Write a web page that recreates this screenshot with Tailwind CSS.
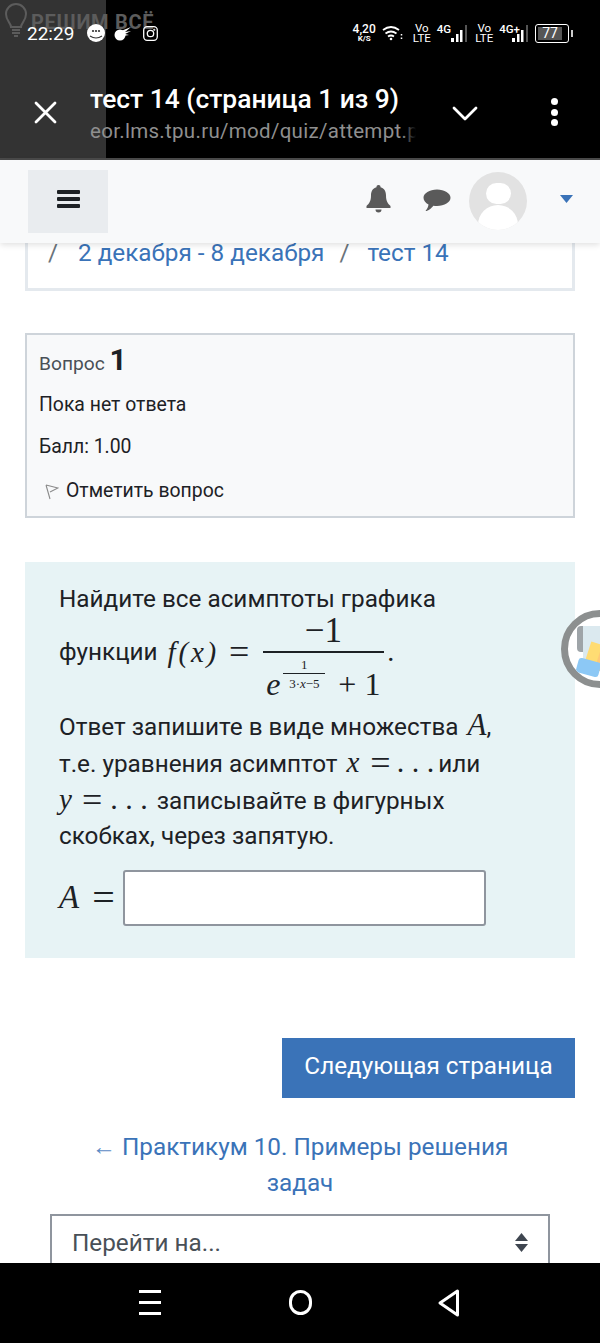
<!DOCTYPE html>
<html lang="ru">
<head>
  <meta charset="UTF-8" />
  <meta name="viewport" content="width=device-width, initial-scale=1" />
  <title>тест 14</title>
  <script src="https://cdn.jsdelivr.net/npm/@tailwindcss/browser@4"></script>
</head>
<body class="bg-white font-['Roboto',sans-serif] text-[#1d2125]">
<div class="relative w-[600px] h-[1343px] overflow-hidden flex flex-col">

  <!-- Status bar + custom tab header -->
  <header class="relative h-[160px] shrink-0 bg-black border-b-2 border-[#4a4a4a] text-white">
    <div class="absolute left-0 top-0 w-[106px] h-full bg-[#333333]"></div>
    <!-- watermark -->
    <svg class="absolute left-[4px] top-[3px]" width="24" height="36" viewBox="0 0 24 36" fill="none" stroke="#5c5c5c" stroke-width="2"><path d="M7 24c0-4-5-6-5-13a10 10 0 0 1 20 0c0 7-5 9-5 13z"/><path d="M8 27h8M8 30h8M10 33h4"/></svg>
    <div class="absolute left-[31px] top-[10px] text-[20px] font-bold leading-[24px] tracking-[0.7px] text-[#5c5c5c]">РЕШИМ ВСЁ</div>

    <div class="relative flex items-center h-[66px] pl-[27px] pr-[27px]">
      <span class="text-[19px] leading-none">22:29</span>
      <svg class="ml-[13px]" width="18" height="18" viewBox="0 0 18 18"><circle cx="9" cy="9" r="9" fill="#fff"/><circle cx="6" cy="7" r="1.100" fill="#333"/><circle cx="9" cy="7" r="1.100" fill="#333"/><circle cx="12" cy="7" r="1.100" fill="#333"/><path d="M3 12q6 4 12 0" stroke="#333" stroke-width="1.200" fill="none"/></svg>
      <svg class="ml-[9px]" width="18" height="16" viewBox="0 0 18 16" fill="#fff"><circle cx="6" cy="10" r="5.500"/><path d="M7 6l10-4-6 5 6-1-6 3 4 1-6 1z"/></svg>
      <svg class="ml-[11px]" width="15" height="15" viewBox="0 0 15 15" fill="none" stroke="#fff" stroke-width="1.300"><rect x="0.700" y="0.700" width="13.600" height="13.600" rx="3.500"/><circle cx="7.500" cy="7.500" r="3.200"/><circle cx="11.300" cy="3.700" r="0.400"/></svg>

      <div class="ml-auto flex items-center">
        <div class="flex flex-col items-center text-[12px] font-medium leading-[10px]"><span>4,20</span><span class="text-[8px] font-bold leading-[9px]">K/S</span></div>
        <svg class="ml-[6px]" width="21" height="16" viewBox="0 0 21 16" fill="none" stroke="#fff" stroke-width="1.800"><path d="M1 5q8-6 16 0M3.500 8.500q5.500-4 11 0M6 11.500q3-2 6 0"/><circle cx="9" cy="14" r="1.300" fill="#fff" stroke="none"/><path d="M19.500 9v1.500M19.500 12.500V14" stroke-width="1.500"/></svg>
        <div class="ml-[10px] flex flex-col items-center text-[11.500px] leading-[10px]"><span>Vo</span><span>LTE</span></div>
        <span class="ml-[6px] mb-[7px] text-[11.500px] font-medium leading-none">4G</span>
        <svg class="mt-[1px]" width="17" height="18" viewBox="0 0 17 18" fill="#fff"><rect x="0" y="13" width="3" height="4"/><rect x="5" y="9" width="2.500" height="8"/><rect x="9" y="5" width="2.500" height="12"/><rect x="14" y="0" width="2" height="17" fill="#555"/></svg>
        <div class="ml-[7px] flex flex-col items-center text-[11.500px] leading-[10px]"><span>Vo</span><span>LTE</span></div>
        <span class="ml-[6px] mb-[7px] text-[11.500px] font-medium leading-none">4G+</span>
        <svg class="mt-[1px] -ml-[8px]" width="17" height="18" viewBox="0 0 17 18" fill="#fff"><rect x="0" y="13" width="3" height="4"/><rect x="5" y="9" width="2.500" height="8"/><rect x="9" y="5" width="2.500" height="12"/><rect x="14" y="0" width="2" height="17" fill="#555"/></svg>
        <div class="ml-[6px] w-[34px] h-[19px] rounded-[3px] border-[1.500px] border-white p-[2px]">
          <div class="w-[24px] h-full bg-[#555555] text-[14px] leading-[12px] text-center">77</div>
        </div>
        <div class="ml-[2px] w-[2px] h-[7px] bg-white/80"></div>
      </div>
    </div>

    <div class="relative flex items-center h-[92px]">
      <svg class="ml-[34px] shrink-0" width="23" height="23" viewBox="0 0 23 23" stroke="#fff" stroke-width="2.800" stroke-linecap="round"><path d="M2 2l19 19M21 2L2 21"/></svg>
      <div class="relative ml-[33px] w-[326px] overflow-hidden whitespace-nowrap">
        <div class="text-[26.400px] font-medium leading-[32px] mt-[2px]">тест 14 (страница 1 из 9)</div>
        <div class="text-[20.500px] tracking-[0.3px] leading-[26px] mt-[3px] text-[#8f8f8f]">eor.lms.tpu.ru/mod/quiz/attempt.php</div>
        <div class="absolute right-0 bottom-0 w-[14px] h-[26px] bg-linear-to-r from-transparent to-black"></div>
      </div>
      <svg class="ml-[36px] mt-[4px] shrink-0" width="26" height="16" viewBox="0 0 26 16" fill="none" stroke="#fff" stroke-width="2.800" stroke-linecap="round" stroke-linejoin="round"><path d="M2 2l11 11L24 2"/></svg>
      <div class="ml-[73px] flex flex-col gap-[3.500px] shrink-0">
        <span class="w-[7px] h-[7px] rounded-full bg-white"></span>
        <span class="w-[7px] h-[7px] rounded-full bg-white"></span>
        <span class="w-[7px] h-[7px] rounded-full bg-white"></span>
      </div>
    </div>
  </header>

  <!-- Moodle nav -->
  <nav class="relative z-10 h-[83px] shrink-0 bg-[#f8f9fa] shadow-[0_2px_6px_rgba(0,0,0,0.12)] flex items-start pt-[10px]">
    <div class="ml-[28px] w-[80px] h-[63px] bg-[#e9ecef] flex flex-col items-center justify-center gap-[3px] pb-[6px]">
      <span class="w-[23px] h-[4px] rounded-[1px] bg-[#1d2125]"></span>
      <span class="w-[23px] h-[4px] rounded-[1px] bg-[#1d2125]"></span>
      <span class="w-[23px] h-[4px] rounded-[1px] bg-[#1d2125]"></span>
    </div>
    <svg class="ml-auto mt-[15px]" width="25" height="28" viewBox="0 0 25 28" fill="#5a5a5a"><path d="M12.500 0a2 2 0 0 1 2 2.300c4 .9 5.500 4.500 5.500 8.200 0 6 2 8 4.500 10.500v2H.500v-2C3 18.500 5 16.500 5 10.500c0-3.700 1.500-7.300 5.500-8.200a2 2 0 0 1 2-2.300z"/><path d="M9.500 24.500h6a3 3 0 0 1-6 0z"/></svg>
    <svg class="ml-[32px] mt-[19px]" width="28" height="24" viewBox="0 0 28 24" fill="#5a5a5a"><path d="M14 .5c7.500 0 13.500 3.700 13.500 8.300S21.500 17 14 17c-1.300 0-2.500-.1-3.700-.3C8.500 19 5.500 22 2.500 22c1.500-1.500 2.800-4 3-6.400C2.500 14 .5 11.600.5 8.800.5 4.200 6.500.5 14 .5z"/></svg>
    <div class="ml-[18px] mt-[2px] w-[58px] h-[58px] rounded-full bg-[#e2e2e2] overflow-hidden flex flex-col items-center">
      <span class="mt-[11px] w-[25px] h-[25px] rounded-full bg-white"></span>
      <span class="mt-[1px] w-[40px] h-[30px] rounded-t-[20px] bg-white"></span>
    </div>
    <svg class="ml-[33px] mr-[27px] mt-[25px]" width="13" height="8" viewBox="0 0 13 8" fill="#3a73b8"><path d="M0 0h13L6.500 8z"/></svg>
  </nav>

  <main class="flex-1 min-h-0 overflow-hidden px-[25px]">
    <!-- Breadcrumb -->
    <div class="h-[48px] border-x-[3px] border-b-[3px] border-[#e4e9ee] flex text-[24.300px] leading-[20px] whitespace-nowrap">
      <div class="ml-[20px] text-[#6a737b] w-[30px]">/</div>
      <a class="text-[#3a73b8]">2 декабря - 8 декабря</a>
      <span class="ml-[15px] w-[28px] text-[#6a737b]">/</span>
      <a class="text-[#3a73b8]">тест 14</a>
    </div>

    <!-- Question info -->
    <section class="mt-[42px] h-[185px] bg-[#f8f9fa] border-2 border-[#ced4da] pl-[12px] pt-[10px] text-[19.400px] leading-[27px]">
      <h3 class="h-[30px] text-[19.200px] leading-[30px] text-[#495057]">Вопрос <b class="text-[30px] font-bold text-[#1d2125]">1</b></h3>
      <p class="mt-[16px]">Пока нет ответа</p>
      <p class="mt-[15px]">Балл: 1.00</p>
      <p class="mt-[17px] flex items-center">
        <svg class="ml-[6px] mr-[7px] mt-[3px]" width="14" height="16" viewBox="0 0 14 16" fill="none" stroke="#8a8a8a" stroke-width="1.100"><path d="M1 1l12 3-8 4M1 1l4 14"/></svg>
        Отметить вопрос
      </p>
    </section>

    <!-- Question text -->
    <section class="mt-[44px] h-[396px] bg-[#e7f3f5] pl-[34px] pr-[34px] pt-[19px] text-[24.300px] leading-[36.600px]">
      <p>Найдите все асимптоты графика</p>
      <div class="flex items-start h-[91px]">
        <span class="mt-[16px]">функции</span>
        <span class="ml-[10px] mt-[16px] font-['Liberation_Serif',serif] text-[29px] italic tracking-[2.800px]">f(x)</span>
        <span class="ml-[10px] mt-[16px] font-['Liberation_Serif',serif] text-[36px] leading-[36px]">=</span>
        <span class="ml-[14px] w-[121px] flex flex-col font-['Liberation_Serif',serif]">
          <span class="h-[33px] pr-[1px] text-center text-[35px] leading-[26px]">−1</span>
          <span class="h-[2px] bg-[#1d2125]"></span>
          <span class="flex items-start pl-[3px]">
            <i class="w-[17px] mt-[13px] text-[32px] leading-[36px]">e</i>
            <span class="flex flex-col items-center w-[42px]">
              <span class="mt-[4px] h-[16px] text-[13px] leading-[16px]">1</span>
              <span class="w-full h-[1px] bg-[#1d2125]"></span>
              <span class="text-[13px] leading-[20px] whitespace-nowrap">3·<i>x</i>−5</span>
            </span>
            <span class="ml-[13px] mt-[13px] text-[32px] leading-[36px] whitespace-nowrap">+ 1</span>
          </span>
        </span>
        <span class="ml-[3px] mt-[16px] font-['Liberation_Serif',serif] text-[28px]">.</span>
      </div>
      <p class="h-[36.600px] whitespace-nowrap">Ответ запишите в виде множества <i class="font-['Liberation_Serif',serif] text-[31px] leading-none ml-[3px]">A</i>,</p>
      <p class="h-[36.600px] whitespace-nowrap">т.е. уравнения асимптот <i class="font-['Liberation_Serif',serif] text-[29px] leading-none ml-[3px]">x</i><span class="font-['Liberation_Serif',serif] text-[36px] leading-none ml-[11px] align-[-3px]">=</span><span class="font-['Liberation_Serif',serif] text-[30px] leading-none ml-[6px] -mr-[2px]">. . .</span> или</p>
      <p class="h-[36.600px] whitespace-nowrap"><i class="font-['Liberation_Serif',serif] text-[29px] leading-none">y</i><span class="font-['Liberation_Serif',serif] text-[36px] leading-none ml-[10px] align-[-3px]">=</span><span class="font-['Liberation_Serif',serif] text-[30px] leading-none ml-[8px] mr-[3px]">. . .</span> записывайте в фигурных</p>
      <p class="h-[36.600px]">скобках, через запятую.</p>
      <div class="mt-[15px] flex items-center">
        <span class="w-[64px] font-['Liberation_Serif',serif] text-[33px] whitespace-nowrap"><i>A</i><span class="ml-[13px] text-[40px] leading-none align-[-3px]">=</span></span>
        <input class="w-[363px] h-[56px] bg-white border-2 border-[#8f959e] rounded-[3px]" />
      </div>
    </section>

    <!-- Next page -->
    <div class="mt-[80px] flex justify-end">
      <button class="w-[293px] h-[60px] pb-[4px] bg-[#3a73b8] text-white text-[24.300px]">Следующая страница</button>
    </div>

    <p class="mt-[31px] mx-auto w-[460px] text-center text-[24.300px] leading-[36px] text-[#3a73b8]"><span class="text-[#5b8ac4]">←</span> Практикум 10. Примеры решения задач</p>

    <div class="mt-[13px] mx-[25px] h-[60px] border-2 border-[#8f959e] flex items-start justify-between pl-[20px] pr-[20px] pt-[11px] text-[24.300px] leading-[32px] text-[#495057]">
      <span>Перейти на...</span>
      <svg class="mt-[6px]" width="13" height="19" viewBox="0 0 13 19" fill="#3f4650"><path d="M6.500 0L13 8H0zM6.500 19L0 11h13z"/></svg>
    </div>
  </main>

  <!-- Floating bubble -->
  <div class="absolute left-[561px] top-[610px] w-[78px] h-[78px] rounded-full bg-white border-[7px] border-[#8c8f8f] overflow-hidden z-20">
    <div class="absolute left-[15px] top-[9px] w-[80px] h-[45px] bg-[#dbe9ef]"></div>
    <div class="absolute left-[9px] top-[9px] w-[6px] h-[26px] rounded-l-[4px] bg-[#9ea4a8]"></div>
    <div class="absolute left-[19px] top-[26px] w-[14px] h-[26px] rotate-[18deg] bg-[#ffdc73]"></div>
    <div class="absolute left-[30px] top-[29px] w-[14px] h-[26px] rotate-[18deg] bg-[#ffc978]"></div>
    <div class="absolute left-[9px] top-[43px] w-[23px] h-[15px] rotate-[15deg] rounded-[3px] bg-[#8cc8f5]"></div>
  </div>

  <!-- Android nav bar -->
  <footer class="relative z-10 h-[80px] shrink-0 bg-black flex items-center pb-[1px]">
    <div class="ml-[139px] w-[22px] flex flex-col gap-[8px]">
      <span class="h-[3px] bg-white"></span><span class="h-[3px] bg-white"></span><span class="h-[3px] bg-white"></span>
    </div>
    <span class="ml-[128px] w-[23px] h-[25px] rounded-full border-[3px] border-white"></span>
    <svg class="ml-[126px]" width="22" height="28" viewBox="0 0 22 28" fill="none" stroke="#fff" stroke-width="3" stroke-linejoin="round"><path d="M19.500 2v24L2 14z"/></svg>
  </footer>
</div>
</body>
</html>
